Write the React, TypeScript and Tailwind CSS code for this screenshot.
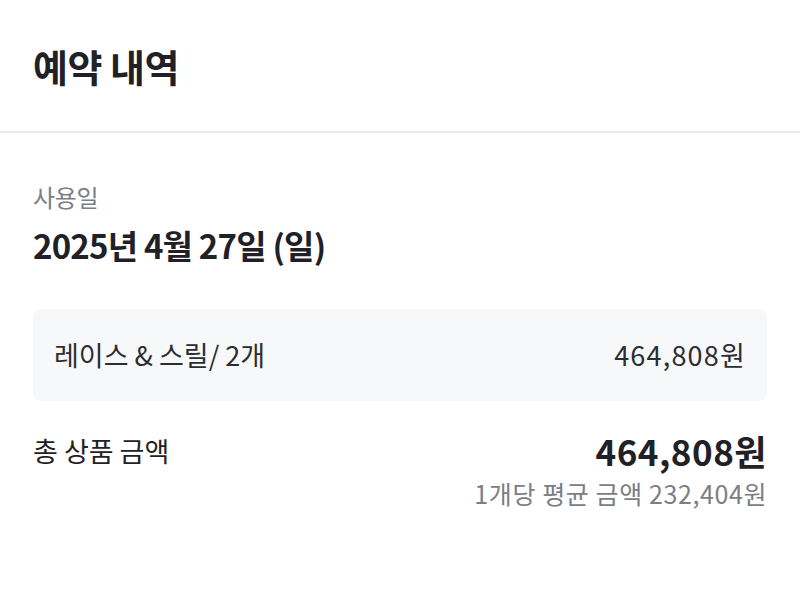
export default function App() {
  return (
    <div
      className="w-[800px] h-[592px] bg-white text-[#1f2126]"
      style={{ fontFamily: "'Noto Sans CJK KR', 'Noto Sans', sans-serif" }}
    >
      {/* Header */}
      <div className="h-[133px] flex items-center px-[33px] border-b-2 border-[#ececee]">
        <h1 className="text-[38px] font-bold tracking-[-0.5px] leading-none">예약 내역</h1>
      </div>

      <div className="px-[33px] pt-[52px]">
        <p className="text-[24px] text-[#7b7e85] leading-none tracking-[-0.3px]">사용일</p>
        <p className="mt-[20px] text-[33px] font-bold leading-none tracking-[-0.8px]">2025년 4월 27일 (일)</p>

        {/* Item row */}
        <div className="mt-[47px] h-[92px] rounded-[8px] bg-[#f7f8fa] flex items-center justify-between px-[21px]">
          <span className="text-[27px] text-[#2b2d31]">레이스 &amp; 스릴/ 2개</span>
          <span className="text-[27px] text-[#2b2d31] tracking-[1.2px]">464,808원</span>
        </div>

        {/* Total */}
        <div className="mt-[30px] flex items-start justify-between">
          <span className="text-[27px] mt-[2px] leading-[36px]">총 상품 금액</span>
          <div className="flex flex-col items-end">
            <span className="text-[35px] font-bold leading-[40px] tracking-[0.5px]">464,808원</span>
            <span className="mt-[7px] text-[25px] leading-[30px] text-[#7b7e85] tracking-[0.6px]">1개당 평균 금액 232,404원</span>
          </div>
        </div>
      </div>
    </div>
  );
}
